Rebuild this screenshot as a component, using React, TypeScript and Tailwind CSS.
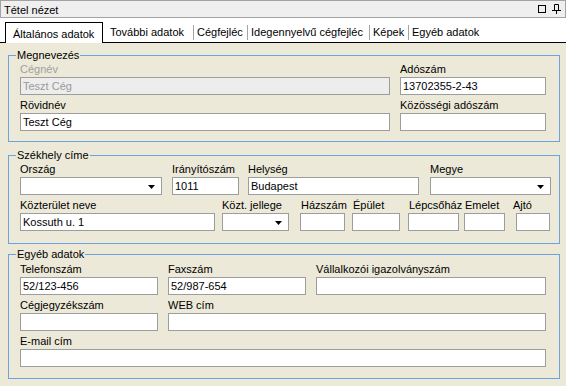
import type { ReactNode } from "react";

const font = "font-['Liberation_Sans',Arial,sans-serif]";

function Arrow() {
  return (
    <svg width="7" height="4" viewBox="0 0 7 4" className="absolute right-[6px] top-[7px]">
      <path d="M0 0h7L3.5 4z" fill="#000" />
    </svg>
  );
}

function Field({ label, w, ml = "", value = "", combo = false, disabled = false, labelClass = "" }: {
  label: string; w: string; ml?: string; value?: string; combo?: boolean; disabled?: boolean; labelClass?: string;
}) {
  return (
    <div className={`${w} ${ml} shrink-0`}>
      <div className={`h-[15px] whitespace-nowrap leading-[15px] ${disabled ? "text-[#a0a0a0]" : "text-black"} ${labelClass}`}>{label}</div>
      <div className={`relative h-[18px] border border-[#9d9d9d] px-[2px] leading-[16px] ${disabled ? "bg-[#ededed] text-[#9a9a9a]" : "bg-white text-black"}`}>
        {value}
        {combo ? <Arrow /> : null}
      </div>
    </div>
  );
}

function Frame({ title, className, children }: { title: string; className: string; children: ReactNode }) {
  return (
    <div className={`relative ml-[8px] w-[552px] border border-[#6ba3da] pl-[11px] ${className}`}>
      <span className="absolute -top-[8px] left-[7px] bg-[#ece9d8] px-px leading-[14px]">{title}</span>
      {children}
    </div>
  );
}

export default function App() {
  return (
    <div className={`${font} h-[386px] w-[566px] overflow-hidden bg-[#ece9d8] text-[11px] text-black`}>
      {/* title bar */}
      <div className="flex h-[18px] items-center justify-between border border-[#a3a3a3] bg-[#efefef] pl-[3px] pr-[4px]">
        <span className="pt-px leading-[16px]">Tétel nézet</span>
        <div className="flex items-center gap-[6px]">
          <svg width="8" height="8" viewBox="0 0 8 8"><rect x="0.5" y="0.5" width="7" height="7" fill="none" stroke="#000" /></svg>
          <svg width="9" height="10" viewBox="0 0 9 10">
            <path d="M2.5 0.5h4v6h-4z" fill="none" stroke="#000" />
            <path d="M0 6.5h9M4.5 7v3" stroke="#000" />
          </svg>
        </div>
      </div>

      {/* tabs */}
      <div className="flex h-[25px] items-end border-b border-black bg-white">
        <div className="-mb-px ml-[5px] flex h-[21px] w-[98px] items-center border border-b-0 border-black bg-white pl-[7px] pt-[2px] leading-[14px]">Általános adatok</div>
        <div className="flex h-[21px] items-center pt-[2px]">
          <span className="w-[90px] pl-[7px]">További adatok</span>
          <span className="h-[15px] w-px bg-[#a5a5a5]" />
          <span className="w-[53px] pl-[3px]">Cégfejléc</span>
          <span className="h-[15px] w-px bg-[#a5a5a5]" />
          <span className="w-[121px] pl-[3px]">Idegennyelvű cégfejléc</span>
          <span className="h-[15px] w-px bg-[#a5a5a5]" />
          <span className="w-[38px] pl-[3px]">Képek</span>
          <span className="h-[15px] w-px bg-[#a5a5a5]" />
          <span className="pl-[3px]">Egyéb adatok</span>
        </div>
      </div>

      <Frame title="Megnevezés" className="mt-[12px] pt-[6px] pb-[10px]">
        <div className="flex">
          <Field label="Cégnév" w="w-[370px]" value="Teszt Cég" disabled />
          <Field label="Adószám" w="w-[146px]" ml="ml-[10px]" value="13702355-2-43" />
        </div>
        <div className="mt-[3px] flex">
          <Field label="Rövidnév" w="w-[370px]" value="Teszt Cég" />
          <Field label="Közösségi adószám" w="w-[146px]" ml="ml-[10px]" />
        </div>
      </Frame>

      <Frame title="Székhely címe" className="mt-[13px] pt-[6px] pb-[12px]">
        <div className="flex">
          <Field label="Ország" w="w-[142px]" combo />
          <Field label="Irányítószám" w="w-[67px]" ml="ml-[10px]" value="1011" />
          <Field label="Helység" w="w-[171px]" ml="ml-[9px]" value="Budapest" />
          <Field label="Megye" w="w-[121px]" ml="ml-[11px]" combo />
        </div>
        <div className="mt-[3px] flex">
          <Field label="Közterület neve" w="w-[195px]" value="Kossuth u. 1" />
          <Field label="Közt. jellege" w="w-[67px]" ml="ml-[7px]" combo />
          <Field label="Házszám" w="w-[45px]" ml="ml-[11px]" labelClass="pl-px" />
          <Field label="Épület" w="w-[48px]" ml="ml-[7px]" labelClass="pl-px" />
          <Field label="Lépcsőház" w="w-[51px]" ml="ml-[8px]" labelClass="pl-px" />
          <Field label="Emelet" w="w-[41px]" ml="ml-[5px]" labelClass="pl-px" />
          <Field label="Ajtó" w="w-[34px]" ml="ml-[11px]" labelClass="-ml-[3px]" />
        </div>
      </Frame>

      <Frame title="Egyéb adatok" className="mt-[10px] pt-[7px] pb-[11px]">
        <div className="flex">
          <Field label="Telefonszám" w="w-[138px]" value="52/123-456" />
          <Field label="Faxszám" w="w-[138px]" ml="ml-[10px]" value="52/987-654" />
          <Field label="Vállalkozói igazolványszám" w="w-[230px]" ml="ml-[10px]" />
        </div>
        <div className="mt-[3px] flex">
          <Field label="Cégjegyzékszám" w="w-[138px]" />
          <Field label="WEB cím" w="w-[378px]" ml="ml-[10px]" />
        </div>
        <div className="mt-[3px] flex">
          <Field label="E-mail cím" w="w-[526px]" />
        </div>
      </Frame>
    </div>
  );
}
